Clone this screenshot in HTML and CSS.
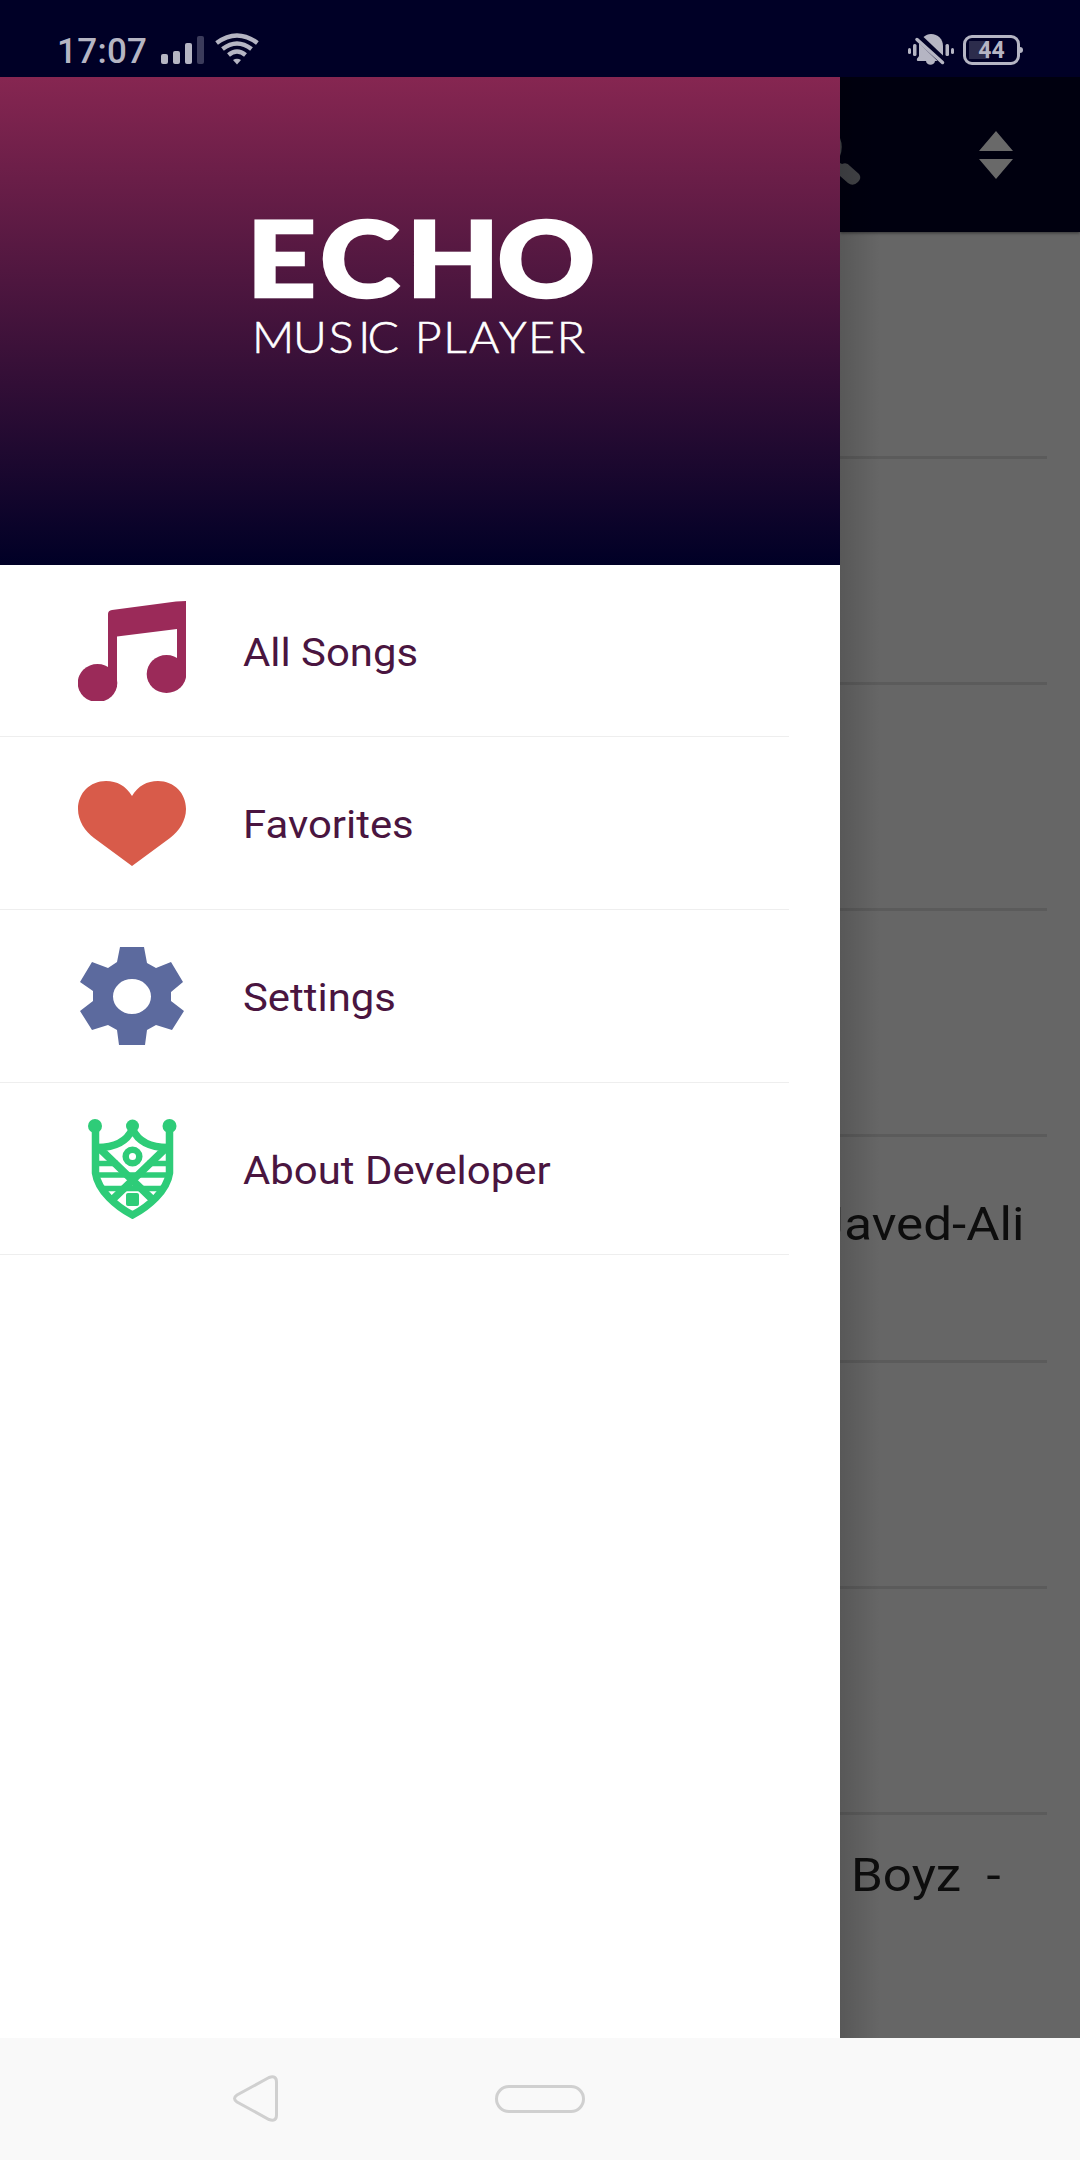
FILE: index.html
```html
<!DOCTYPE html>
<html lang="en">
<head>
<meta charset="utf-8">
<title>Echo Music Player</title>
<link rel="stylesheet" href="styles.css">
</head>
<body>
<div class="phone">
  <header class="status">
    <div class="status-left">
      <span class="clock">17:07</span>
      <svg class="signal" width="44" height="28" viewBox="0 0 44 28" fill="#b5b5c3">
        <rect x="0" y="18" width="7" height="10" rx="2"/><rect x="12" y="15" width="7" height="13" rx="2"/><rect x="24" y="7" width="7" height="21" rx="2"/><rect x="36" y="0" width="7" height="28" rx="2" fill="#3b3b5b"/>
      </svg>
      <svg class="wifi" width="44" height="32" viewBox="0 0 44 32" fill="none" stroke="#b5b5c3" stroke-width="4.500">
        <path d="M1.600 10Q22-5 42.400 10"/><path d="M7.500 16Q22 5 36.500 16"/><path d="M13.500 22Q22 15 30.500 22"/><path d="M18 27Q22 24.500 26 27L22 31.500Z" fill="#b5b5c3" stroke="none"/>
      </svg>
    </div>
    <div class="status-right">
      <svg width="47" height="34" viewBox="0 0 47 34" fill="#b5b5c3">
        <rect x="0" y="14" width="3" height="6" rx="1.500"/><rect x="5" y="10" width="3.500" height="12" rx="1.500"/><rect x="37.500" y="10" width="3.500" height="12" rx="1.500"/><rect x="43" y="14" width="3" height="6" rx="1.500"/>
        <path d="M15.500 3C18 1 20 0 23 0C30 0 35 5 35 12V21.500Z"/>
        <path d="M11 9L29.500 27H27C26.500 32 18.500 32 18 27H10C8.500 27 8.500 24.500 10 23.500L11 22Z"/>
        <path d="M9 5.500L34.500 28.500" stroke="#b5b5c3" stroke-width="3.500" stroke-linecap="round"/>
      </svg>
      <div class="battery"><span>44</span></div>
    </div>
  </header>

  <main class="stage">
    <aside class="drawer">
      <div class="brand">
        <svg width="840" height="488" viewBox="0 77 840 488" fill="#fff">
          <text class="brand-name" transform="scale(1.150 1)" y="297" x="214.500 278.300 353.200 432.500">ECHO</text>
          <text class="brand-sub" transform="scale(1.080 1)" y="353" x="233.400 271.400 304.500 331.800 340.300 371.500 384 410.500 434.200 462 489 515.500">MUSIC PLAYER</text>
        </svg>
      </div>
      <nav>
        <a class="item">
          <svg class="icon" width="108" height="100" viewBox="0 0 108 100" fill="#9b2a59"><path d="M30 13Q30 9.500 34 9L98 .500Q103 0 108 0V72H99V28L39 35.500V86H30Z"/><ellipse cx="19.500" cy="82" rx="19.800" ry="19"/><ellipse cx="88.500" cy="73" rx="19.800" ry="19"/></svg>
          <span>All Songs</span>
        </a>
        <a class="item tall">
          <svg class="icon" width="108" height="85" viewBox="0 0 108 85" fill="#d85b4a"><path d="M54 15C60 5 69 0 80 0C96 0 108 12 108 28C108 40 101 50 92 57L54 85L16 57C7 50 0 40 0 28C0 12 12 0 28 0C39 0 48 5 54 15Z"/></svg>
          <span>Favorites</span>
        </a>
        <a class="item tall">
          <svg class="icon" width="108" height="100" viewBox="0 0 108 100" fill="#5c6a9e" fill-rule="evenodd"><path d="M42 1H66L69 17L78 22L93 16L105 36L93 46V55L106 65L94 84L78 79L69 84L67 99H41L39 84L30 79L14 84L2 65L15 55V45L2 36L14 16L30 22L39 16ZM54 33A19 17.500 0 1 0 54 68A19 17.500 0 1 0 54 33Z"/></svg>
          <span>Settings</span>
        </a>
        <a class="item">
          <svg class="icon" width="108" height="100" viewBox="0 0 108 100" fill="none" stroke="#2ecc78" stroke-width="7.500">
            <path d="M17.500 7V54C20 72 39 88 54.500 96C70 88 89 72 91.500 54V7M17.500 28.500C40 29 50 20 54.500 10C59 20 69 29 91.500 28.500M20 28L76 82M89 28L33 82"/>
            <path d="M18 44.500H40M69 44.500H91M18 56H91M22 69.500H87" stroke-width="5.500"/>
            <circle cx="54.500" cy="37.500" r="6.800" stroke-width="6.500"/>
            <g fill="#2ecc78" stroke="none"><circle cx="17" cy="7" r="7"/><circle cx="54.500" cy="7" r="6.500"/><circle cx="91.500" cy="7" r="7"/><rect x="48" y="74" width="13" height="13" rx="2"/></g>
          </svg>
          <span>About Developer</span>
        </a>
      </nav>
    </aside>

    <section class="page">
      <div class="toolbar">
        <svg width="240" height="155" viewBox="0 0 240 155">
          <path d="M0 61Q3.500 70 0 79ZM0 86L2 87Q7 85 10 89L19 97Q22 101 18 105Q13 110 8 106L0 99Z" fill="#434448"/>
          <path d="M139 74L156 54L173 74ZM139 82L156 102L173 82Z" fill="#696969"/>
        </svg>
      </div>
      <ul class="songs">
        <li></li><li></li><li></li><li></li>
        <li><span class="artist javed">Javed-Ali</span></li>
        <li></li><li></li>
        <li><span class="artist boyz">Boyz&nbsp; -</span></li>
      </ul>
      <div class="edge-shadow"></div>
    </section>
  </main>

  <footer class="navbar">
    <svg width="1080" height="122" viewBox="0 2038 1080 122" fill="none" stroke="#d0d0d0" stroke-width="3">
      <path d="M269 2077.500L237 2095Q232 2098.500 237 2102L269 2119.500Q276.500 2122 276.500 2115V2082Q276.500 2075 269 2077.500Z"/>
      <rect x="496.500" y="2086.500" width="87" height="25" rx="12.500"/>
    </svg>
  </footer>
</div>
</body>
</html>
```
FILE: styles.css
```css
* { box-sizing: border-box; }
body { margin: 0; font-family: Roboto, "Liberation Sans", sans-serif; }
svg { display: block; }
.phone { width: 1080px; height: 2160px; display: flex; flex-direction: column; overflow: hidden; }

.status { height: 77px; flex: none; background: #000026; display: flex; justify-content: space-between; padding: 0 60px 0 57px; color: #b5b5c3; }
.status-left, .status-right { display: flex; align-items: flex-start; }
.clock { font-size: 35px; font-weight: 500; line-height: 40px; padding-top: 32px; width: 104px; letter-spacing: 0.3px; white-space: nowrap; }
.signal { margin-top: 36px; }
.wifi { margin: 33px 0 0 10px; }
.status-right { padding-top: 34px; gap: 8px; }
.battery { width: 57px; height: 30px; margin-top: 1px; border: 3px solid #b5b5c3; border-radius: 9px; position: relative; padding: 3px; display: flex; background: linear-gradient(#2c2c4c, #2c2c4c) 3px 3px / 20px 18px no-repeat; }
.battery span { font-size: 23px; line-height: 20px; font-weight: 700; margin: 0 auto; }
.battery::after { content: ""; position: absolute; right: -6px; top: 9px; width: 3px; height: 6px; border-radius: 0 3px 3px 0; background: #b5b5c3; }

.stage { flex: 1; display: flex; min-height: 0; }
.drawer { width: 840px; flex: none; background: #fff; }
.brand { height: 488px; background: linear-gradient(#862651, #000026); }
.brand-name { font: 900 105px Lato, sans-serif; stroke: #fff; stroke-width: 2.5px; }
.brand-sub { font: 300 43px Lato, sans-serif; stroke: #fff; stroke-width: 0.6px; }
.item { width: 789px; height: 172px; border-bottom: 1px solid #eee; display: flex; align-items: center; padding-left: 78px; color: #4a1540; font-size: 38.5px; }
.item.tall { height: 173px; }
.item span { margin-left: 57px; white-space: nowrap; padding-top: 3px; transform: scaleX(1.088); transform-origin: left; }

.page { flex: 1; background: #666; position: relative; overflow: hidden; }
.toolbar { height: 155px; background: #00000f; box-shadow: 0 1px 3px rgba(0, 0, 0, .5); }
.songs { list-style: none; margin: 0; padding: 1px 33px 0 0; }
.songs li { height: 226px; border-bottom: 3px solid #5b5b5b; }
.songs li:last-child { border: 0; }
.artist { display: block; font-size: 47px; line-height: 56px; color: #0d0d0d; white-space: nowrap; transform: scaleX(1.088); transform-origin: left; }
.javed { padding-top: 59px; margin-left: -24px; }
.boyz { padding-top: 32px; margin-left: 11px; }
.edge-shadow { position: absolute; inset: 0 auto 0 0; width: 40px; background: linear-gradient(90deg, rgba(0, 0, 0, .14), transparent); }

.navbar { height: 122px; flex: none; background: #f9f9f9; }
```
